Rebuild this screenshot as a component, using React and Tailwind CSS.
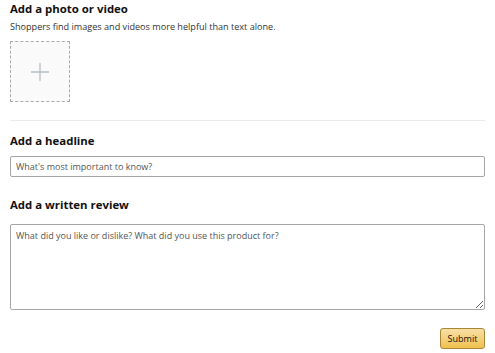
export default function App() {
  return (
    <div
      className="w-[495px] h-[353px] bg-white px-[10px] pt-[1px] text-[#111]"
      style={{ fontFamily: '"Open Sans", "Noto Sans", sans-serif' }}
    >
      <h2 className="text-[11.4px] font-bold leading-[16px]">Add a photo or video</h2>
      <p className="text-[9.1px] leading-[12px] mt-[4px] text-[#333]">
        Shoppers find images and videos more helpful than text alone.
      </p>
      <div className="mt-[8px] w-[60px] h-[61px] border border-dashed border-[#aaa] bg-[#fafafa] flex items-center justify-center">
        <svg width="20" height="20" viewBox="0 0 20 20">
          <path d="M10 1v18M1 10h18" stroke="#b4bec3" strokeWidth="1.3" fill="none" />
        </svg>
      </div>
      <div className="mt-[18px] h-px bg-[#eaeaea]" />
      <h2 className="text-[11.4px] font-bold leading-[16px] mt-[12px]">Add a headline</h2>
      <input
        className="mt-[7px] block w-full h-[21px] border border-[#a6a6a6] rounded-[2px] px-[5px] text-[9px] placeholder:text-[#555] outline-none"
        placeholder="What's most important to know?"
      />
      <h2 className="text-[11.4px] font-bold leading-[16px] mt-[20px]">Add a written review</h2>
      <textarea
        className="mt-[11px] block w-full h-[86px] border border-[#a6a6a6] rounded-[2px] px-[5px] py-[5px] text-[9px] leading-[11px] placeholder:text-[#555] outline-none"
        placeholder="What did you like or dislike? What did you use this product for?"
      />
      <div className="flex justify-end mt-[18px]">
        <button className="w-[45px] h-[21px] rounded-[3px] border border-[#a88734] bg-gradient-to-b from-[#f7dfa5] to-[#f0c14b] text-[9px] text-[#111] flex items-center justify-center">
          Submit
        </button>
      </div>
    </div>
  );
}
